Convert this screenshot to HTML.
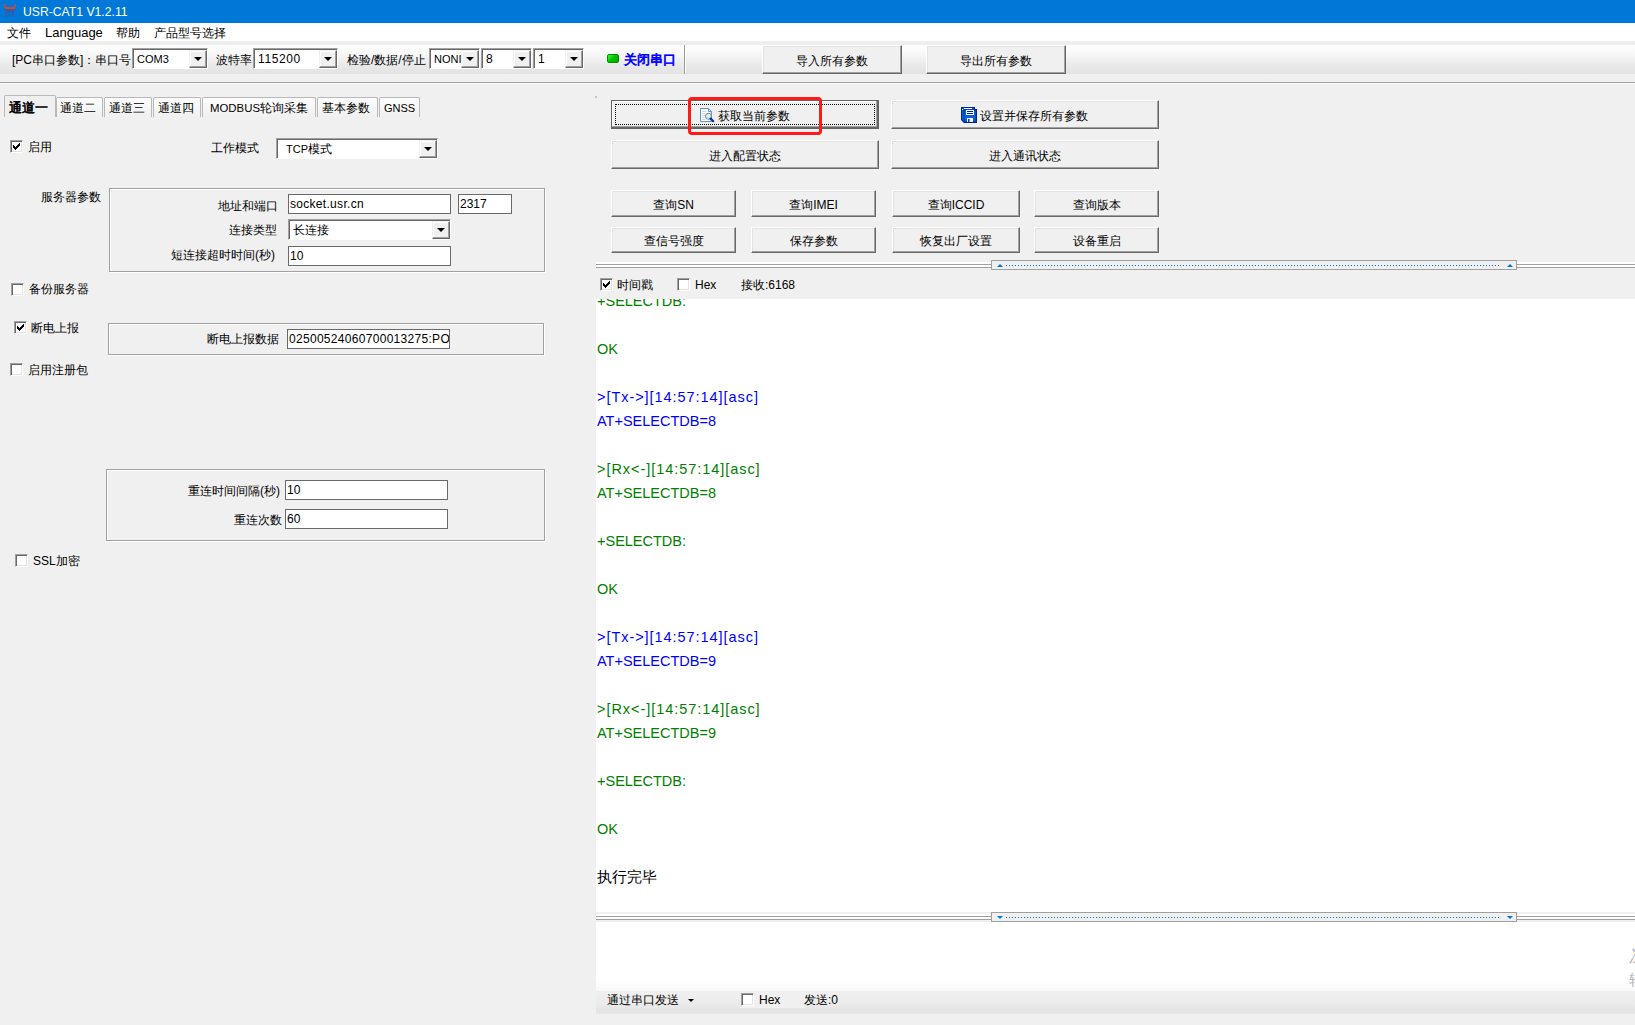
<!DOCTYPE html>
<html><head><meta charset="utf-8">
<style>
*{box-sizing:border-box;margin:0;padding:0}
html,body{width:1635px;height:1025px;overflow:hidden;background:#f0f0f0;font-family:"Liberation Sans",sans-serif;font-size:12px;color:#000;position:relative}
.a{position:absolute}
.t{position:absolute;white-space:nowrap;line-height:14px;height:14px}
.btn{position:absolute;background:#f0f0f0;border:1px solid;border-color:#fff #696969 #696969 #fff;box-shadow:inset -1px -1px #a0a0a0,inset 1px 1px #e3e3e3;text-align:center;white-space:nowrap}
.btn span{position:absolute;left:0;right:0;top:50%;margin-top:-6px;line-height:14px}
.cb{position:absolute;width:13px;height:13px;background:#fff;border:1px solid;border-color:#a0a0a0 #fff #fff #a0a0a0;box-shadow:inset 1px 1px #696969,inset -1px -1px #e3e3e3}
.cb svg{position:absolute;left:1px;top:1px}
.ed{position:absolute;background:#fff;border:1px solid #6a6a6a;white-space:nowrap;overflow:hidden}
.ed span{position:absolute;left:1px;top:50%;margin-top:-7px;line-height:14px}
.combo{position:absolute;background:#fff;border:1px solid;border-color:#a0a0a0 #fff #fff #a0a0a0;box-shadow:inset 1px 1px #696969;white-space:nowrap;overflow:hidden}
.combo span{position:absolute;left:4px;top:50%;margin-top:-7px;line-height:14px}
.combo i{position:absolute;right:0;top:1px;bottom:0;width:18px;background:#f0f0f0;border:1px solid;border-color:#f0f0f0 #696969 #696969 #f0f0f0;box-shadow:inset -1px -1px #a0a0a0,inset 1px 1px #fff}
.combo i:after{content:"";position:absolute;left:50%;top:50%;margin-left:-4px;margin-top:-2px;border-left:4px solid transparent;border-right:4px solid transparent;border-top:4px solid #000}
.grp{position:absolute;border:1px solid #a0a0a0;box-shadow:inset 1px 1px #fff,1px 1px #fff}
.tab{position:absolute;border:1px solid #b9b9b9;border-bottom:none;border-radius:2px 2px 0 0;background:linear-gradient(#fdfdfd,#f0f0f0)}
.tab span{position:absolute;left:0;right:0;text-align:center;top:4px;line-height:14px}
.log{position:absolute;margin-top:2px;white-space:nowrap;font-size:14.5px;line-height:24px;height:24px}
.bl{color:#0000ff}.gr{color:#008000}
</style></head><body>

<!-- title bar -->
<div class="a" style="left:0;top:0;width:1635px;height:23px;background:#0078d7"></div>
<svg class="a" style="left:0;top:0" width="22" height="22" viewBox="0 0 22 22">
<path d="M4 4.5 Q4.5 3.5 5.5 4.5 L6 7 L14 7 L14.5 4.5 Q15.5 3.5 16 4.5 L15 9 L5 9Z" fill="#d8452c"/>
<path d="M4.5 9 L15.5 9 L15 12 L14 12 L13.5 17.5 L12.5 17.5 L12 12 L10.5 12 L10 16.5 L9 16.5 L8.5 12 L7.5 12 L7 17.5 L6 17.5 L5 12Z" fill="#2b5fb0"/>
</svg>
<div class="t" style="left:23px;top:5px;color:#fff;font-size:12.2px">USR-CAT1 V1.2.11</div>

<!-- menu -->
<div class="a" style="left:0;top:23px;width:1635px;height:18px;background:#fff"></div>
<div class="t" style="left:7px;top:26px">文件</div>
<div class="t" style="left:45px;top:26px;font-size:13px">Language</div>
<div class="t" style="left:116px;top:26px">帮助</div>
<div class="t" style="left:154px;top:26px">产品型号选择</div>

<!-- toolbar -->
<div class="a" style="left:0;top:41px;width:1635px;height:4px;background:#eeeeee"></div>
<div class="a" style="left:0;top:45px;width:1635px;height:29px;background:linear-gradient(#fefefe,#f8f8f8 30%,#e9e9e9 70%,#e3e3e3)"></div>
<div class="a" style="left:0;top:82px;width:1635px;height:1px;background:#a0a0a0"></div>
<div class="a" style="left:0;top:83px;width:1635px;height:1px;background:#fff"></div>

<div class="t" style="left:12px;top:53px">[PC串口参数]：串口号</div>
<div class="combo" style="left:132px;top:48px;width:76px;height:21px"><span style="font-size:11px">COM3</span><i></i></div>
<div class="t" style="left:216px;top:53px">波特率</div>
<div class="combo" style="left:253px;top:48px;width:85px;height:21px"><span style="letter-spacing:.6px">115200</span><i></i></div>
<div class="t" style="left:347px;top:53px">检验/数据/停止</div>
<div class="combo" style="left:429px;top:48px;width:51px;height:21px"><span style="font-size:11px">NONI</span><i></i></div>
<div class="combo" style="left:481px;top:48px;width:51px;height:21px"><span>8</span><i></i></div>
<div class="combo" style="left:533px;top:48px;width:51px;height:21px"><span>1</span><i></i></div>
<div class="a" style="left:607px;top:54px;width:12px;height:9px;border-radius:2px;background:linear-gradient(135deg,#40ff40,#00c000 50%,#00a000);border:1px solid #008a00"></div>
<div class="t" style="left:624px;top:53px;color:#0000ff;font-size:13px;-webkit-text-stroke:0.7px #0000ff">关闭串口</div>
<div class="a" style="left:684px;top:45px;width:1px;height:29px;background:#9a9a9a"></div>
<div class="a" style="left:685px;top:45px;width:1px;height:28px;background:#fff"></div>
<div class="btn" style="left:762px;top:45px;width:140px;height:29px"><span>导入所有参数</span></div>
<div class="btn" style="left:926px;top:45px;width:140px;height:29px"><span>导出所有参数</span></div>

<!-- tabs -->
<div class="tab" style="left:56px;top:97px;width:47px;height:20px"></div>
<div class="tab" style="left:104px;top:97px;width:48px;height:20px"></div>
<div class="tab" style="left:153px;top:97px;width:48px;height:20px"></div>
<div class="tab" style="left:202px;top:97px;width:114px;height:20px"></div>
<div class="tab" style="left:317px;top:97px;width:61px;height:20px"></div>
<div class="tab" style="left:379px;top:97px;width:41px;height:20px"></div>
<div class="tab" style="left:4px;top:95px;width:52px;height:22px;background:#f0f0f0"></div>
<div class="t" style="left:60px;top:101px">通道二</div>
<div class="t" style="left:109px;top:101px">通道三</div>
<div class="t" style="left:158px;top:101px">通道四</div>
<div class="t" style="left:210px;top:101px"><span style="font-size:11.4px">MODBUS</span>轮询采集</div>
<div class="t" style="left:322px;top:101px">基本参数</div>
<div class="t" style="left:384px;top:101px;font-size:11px">GNSS</div>
<div class="t" style="left:9px;top:101px;font-size:12.5px;-webkit-text-stroke:0.6px #000">通道一</div>

<!-- LEFT PANEL -->
<div class="cb" style="left:10px;top:140px"><svg width="11" height="11" shape-rendering="crispEdges"><path d="M7 1h1v1h-1zM6 2h1v1h-1zM7 2h1v1h-1zM1 3h1v1h-1zM5 3h1v1h-1zM6 3h1v1h-1zM7 3h1v1h-1zM1 4h1v1h-1zM2 4h1v1h-1zM4 4h1v1h-1zM5 4h1v1h-1zM6 4h1v1h-1zM1 5h1v1h-1zM2 5h1v1h-1zM3 5h1v1h-1zM4 5h1v1h-1zM5 5h1v1h-1zM2 6h1v1h-1zM3 6h1v1h-1zM4 6h1v1h-1zM3 7h1v1h-1z" fill="#000"/></svg></div>
<div class="t" style="left:28px;top:140px">启用</div>
<div class="t" style="left:211px;top:141px">工作模式</div>
<div class="combo" style="left:276px;top:138px;width:162px;height:21px"><span style="left:9px"><span style="position:static;font-size:11px">TCP</span>模式</span><i></i></div>

<div class="t" style="left:41px;top:190px">服务器参数</div>
<div class="grp" style="left:109px;top:188px;width:436px;height:84px"></div>
<div class="t" style="left:218px;top:199px">地址和端口</div>
<div class="ed" style="left:288px;top:194px;width:163px;height:20px"><span style="letter-spacing:.3px">socket.usr.cn</span></div>
<div class="ed" style="left:458px;top:194px;width:54px;height:20px"><span>2317</span></div>
<div class="t" style="left:229px;top:223px">连接类型</div>
<div class="combo" style="left:288px;top:219px;width:163px;height:21px"><span>长连接</span><i></i></div>
<div class="t" style="left:171px;top:248px">短连接超时时间(秒)</div>
<div class="ed" style="left:288px;top:246px;width:163px;height:20px"><span>10</span></div>

<div class="cb" style="left:11px;top:283px"></div>
<div class="t" style="left:29px;top:282px">备份服务器</div>

<div class="cb" style="left:14px;top:321px"><svg width="11" height="11" shape-rendering="crispEdges"><path d="M7 1h1v1h-1zM6 2h1v1h-1zM7 2h1v1h-1zM1 3h1v1h-1zM5 3h1v1h-1zM6 3h1v1h-1zM7 3h1v1h-1zM1 4h1v1h-1zM2 4h1v1h-1zM4 4h1v1h-1zM5 4h1v1h-1zM6 4h1v1h-1zM1 5h1v1h-1zM2 5h1v1h-1zM3 5h1v1h-1zM4 5h1v1h-1zM5 5h1v1h-1zM2 6h1v1h-1zM3 6h1v1h-1zM4 6h1v1h-1zM3 7h1v1h-1z" fill="#000"/></svg></div>
<div class="t" style="left:31px;top:321px">断电上报</div>
<div class="grp" style="left:108px;top:323px;width:436px;height:32px"></div>
<div class="t" style="left:207px;top:332px">断电上报数据</div>
<div class="ed" style="left:287px;top:329px;width:163px;height:20px"><span style="letter-spacing:.3px">02500524060700013275:PO</span></div>

<div class="cb" style="left:10px;top:363px"></div>
<div class="t" style="left:28px;top:363px">启用注册包</div>

<div class="grp" style="left:106px;top:469px;width:439px;height:72px"></div>
<div class="t" style="left:188px;top:484px">重连时间间隔(秒)</div>
<div class="ed" style="left:285px;top:480px;width:163px;height:20px"><span>10</span></div>
<div class="t" style="left:234px;top:513px">重连次数</div>
<div class="ed" style="left:285px;top:509px;width:163px;height:20px"><span>60</span></div>

<div class="cb" style="left:15px;top:554px"></div>
<div class="t" style="left:33px;top:554px">SSL加密</div>

<!-- RIGHT PANEL -->
<div class="a" style="left:595px;top:96px;width:2px;height:2px;background:#c4c4c4"></div>
<div class="btn" style="left:611px;top:100px;width:268px;height:29px;border-color:#646464;box-shadow:inset -1px -1px #696969,inset -2px -2px #a0a0a0,inset 1px 1px #fff"><div class="a" style="left:3px;top:3px;right:3px;bottom:3px;border:1px dotted #000"></div><span style="padding-left:18px">获取当前参数</span></div>
<div class="btn" style="left:891px;top:100px;width:268px;height:29px"><span style="padding-left:18px">设置并保存所有参数</span></div>
<div class="btn" style="left:611px;top:140px;width:268px;height:29px"><span>进入配置状态</span></div>
<div class="btn" style="left:891px;top:140px;width:268px;height:29px"><span>进入通讯状态</span></div>
<div class="btn" style="left:611px;top:190px;width:125px;height:27px"><span>查询SN</span></div>
<div class="btn" style="left:751px;top:190px;width:125px;height:27px"><span>查询IMEI</span></div>
<div class="btn" style="left:892px;top:190px;width:128px;height:27px"><span>查询ICCID</span></div>
<div class="btn" style="left:1034px;top:190px;width:125px;height:27px"><span>查询版本</span></div>
<div class="btn" style="left:611px;top:227px;width:125px;height:26px"><span>查信号强度</span></div>
<div class="btn" style="left:751px;top:227px;width:125px;height:26px"><span>保存参数</span></div>
<div class="btn" style="left:892px;top:227px;width:128px;height:26px"><span>恢复出厂设置</span></div>
<div class="btn" style="left:1034px;top:227px;width:125px;height:26px"><span>设备重启</span></div>


<!-- icons -->
<svg class="a" style="left:696px;top:104px" width="24" height="22" viewBox="0 0 24 22">
<path d="M4.5 4.5 H12.5 L15.5 7.5 V17.5 H4.5Z" fill="#fff" stroke="#5b97d4" stroke-width="1"/>
<path d="M12.5 4.5 V7.5 H15.5" fill="none" stroke="#5b97d4" stroke-width="1"/>
<rect x="6" y="7" width="4.5" height="1" fill="#d8d8d8"/>
<rect x="6" y="9" width="3.5" height="1" fill="#d8d8d8"/>
<rect x="6" y="11" width="2.5" height="1" fill="#d8d8d8"/>
<rect x="6" y="13" width="2.5" height="1" fill="#d8d8d8"/>
<rect x="6" y="15" width="3.5" height="1" fill="#d8d8d8"/>
<circle cx="12.5" cy="12.3" r="3" fill="#c6f6f8" stroke="#7a7a7a" stroke-width="1"/>
<path d="M14.6 14.6 L17.2 17.2" stroke="#0a2ea0" stroke-width="2.2" stroke-linecap="round"/>
</svg>
<svg class="a" style="left:957px;top:104px" width="24" height="22" viewBox="0 0 24 22">
<path d="M4 3 H18 V5 H20 V19 H7 L4 16Z" fill="#00229c"/>
<path d="M5 4 H17 V6 H19 V18 H7.5 L5 15.5Z" fill="#0064d2"/>
<rect x="7" y="6" width="12" height="12" fill="#0064d2" stroke="#00229c" stroke-width="0.8"/>
<rect x="7" y="4" width="8" height="1" fill="#fff"/>
<rect x="9" y="6" width="8" height="5" fill="#fff"/>
<rect x="10" y="7" width="6" height="1" fill="#00229c"/>
<rect x="10" y="9" width="6" height="1" fill="#00229c"/>
<rect x="10" y="14" width="6" height="4" fill="#f8f4e8"/>
<rect x="11" y="15" width="1.6" height="3" fill="#0040b8"/>
<rect x="5" y="5" width="1" height="1" fill="#fff"/>
</svg>

<!-- red highlight -->
<div class="a" style="left:688px;top:97px;width:134px;height:38px;border:3px solid #ff1a1a;border-radius:4px"></div>

<!-- splitter 1 -->
<div class="a" style="left:596px;top:262px;width:1039px;height:2px;background:#fff"></div>
<div class="a" style="left:596px;top:264px;width:1039px;height:1px;background:#a0a0a0"></div>
<div class="a" style="left:596px;top:265px;width:1039px;height:2px;background:#fff"></div>
<div class="a" style="left:596px;top:267px;width:1039px;height:1px;background:#a0a0a0"></div>
<div class="a" style="left:991px;top:260px;width:526px;height:10px;background:#f0f0f0;border:1px solid #a0a0a0"></div>
<div class="a" style="left:1006px;top:265px;width:494px;height:1px;background:repeating-linear-gradient(90deg,#0078d7 0 1px,transparent 1px 3px)"></div>
<div class="a" style="left:997px;top:264px;width:0;height:0;border-left:3px solid transparent;border-right:3px solid transparent;border-bottom:3px solid #0078d7"></div>
<div class="a" style="left:1507px;top:264px;width:0;height:0;border-left:3px solid transparent;border-right:3px solid transparent;border-bottom:3px solid #0078d7"></div>

<!-- receive header -->
<div class="cb" style="left:600px;top:278px"><svg width="11" height="11" shape-rendering="crispEdges"><path d="M7 1h1v1h-1zM6 2h1v1h-1zM7 2h1v1h-1zM1 3h1v1h-1zM5 3h1v1h-1zM6 3h1v1h-1zM7 3h1v1h-1zM1 4h1v1h-1zM2 4h1v1h-1zM4 4h1v1h-1zM5 4h1v1h-1zM6 4h1v1h-1zM1 5h1v1h-1zM2 5h1v1h-1zM3 5h1v1h-1zM4 5h1v1h-1zM5 5h1v1h-1zM2 6h1v1h-1zM3 6h1v1h-1zM4 6h1v1h-1zM3 7h1v1h-1z" fill="#000"/></svg></div>
<div class="t" style="left:617px;top:278px">时间戳</div>
<div class="cb" style="left:677px;top:278px"></div>
<div class="t" style="left:695px;top:278px">Hex</div>
<div class="t" style="left:741px;top:278px">接收:6168</div>

<!-- log area -->
<div class="a" style="left:596px;top:299px;width:1039px;height:613px;background:#fff;overflow:hidden">
</div>
<div class="a" style="left:596px;top:299px;width:1039px;height:613px;overflow:hidden">
<div class="log gr" style="left:1px;top:-12px">+SELECTDB:</div>
<div class="log gr" style="left:1px;top:36px">OK</div>
<div class="log bl" style="left:1px;top:84px;letter-spacing:.95px">&gt;[Tx-&gt;][14:57:14][asc]</div>
<div class="log bl" style="left:1px;top:108px">AT+SELECTDB=8</div>
<div class="log gr" style="left:1px;top:156px;letter-spacing:.95px">&gt;[Rx&lt;-][14:57:14][asc]</div>
<div class="log gr" style="left:1px;top:180px">AT+SELECTDB=8</div>
<div class="log gr" style="left:1px;top:228px">+SELECTDB:</div>
<div class="log gr" style="left:1px;top:276px">OK</div>
<div class="log bl" style="left:1px;top:324px;letter-spacing:.95px">&gt;[Tx-&gt;][14:57:14][asc]</div>
<div class="log bl" style="left:1px;top:348px">AT+SELECTDB=9</div>
<div class="log gr" style="left:1px;top:396px;letter-spacing:.95px">&gt;[Rx&lt;-][14:57:14][asc]</div>
<div class="log gr" style="left:1px;top:420px">AT+SELECTDB=9</div>
<div class="log gr" style="left:1px;top:468px">+SELECTDB:</div>
<div class="log gr" style="left:1px;top:516px">OK</div>
<div class="log" style="left:1px;top:564px">执行完毕</div>
</div>

<!-- splitter 2 -->
<div class="a" style="left:596px;top:912px;width:1039px;height:10px;background:#f0f0f0"></div>
<div class="a" style="left:596px;top:914px;width:1039px;height:2px;background:#fff"></div>
<div class="a" style="left:596px;top:916px;width:1039px;height:1px;background:#a0a0a0"></div>
<div class="a" style="left:596px;top:917px;width:1039px;height:2px;background:#fff"></div>
<div class="a" style="left:596px;top:919px;width:1039px;height:1px;background:#a0a0a0"></div>
<div class="a" style="left:991px;top:912px;width:526px;height:10px;background:#f0f0f0;border:1px solid #a0a0a0"></div>
<div class="a" style="left:1006px;top:917px;width:494px;height:1px;background:repeating-linear-gradient(90deg,#0078d7 0 1px,transparent 1px 3px)"></div>
<div class="a" style="left:997px;top:916px;width:0;height:0;border-left:3px solid transparent;border-right:3px solid transparent;border-top:3px solid #0078d7"></div>
<div class="a" style="left:1507px;top:916px;width:0;height:0;border-left:3px solid transparent;border-right:3px solid transparent;border-top:3px solid #0078d7"></div>

<!-- send area -->
<div class="a" style="left:596px;top:922px;width:1039px;height:61px;background:#fff"></div>
<div class="a" style="left:596px;top:981px;width:1039px;height:10px;background:linear-gradient(#fff,#f8f8f8)"></div>
<div class="a" style="left:596px;top:991px;width:1039px;height:23px;background:linear-gradient(#f0f0f0,#ececec 50%,#e4e4e4 85%,#e6e6e6)"></div>
<div class="t" style="left:607px;top:993px">通过串口发送</div>
<div class="a" style="left:688px;top:999px;width:0;height:0;border-left:3px solid transparent;border-right:3px solid transparent;border-top:3px solid #000"></div>
<div class="a" style="left:740px;top:991px;width:65px;height:17px;background:#f0f0f0"></div>
<div class="cb" style="left:741px;top:993px"></div>
<div class="t" style="left:759px;top:993px">Hex</div>
<div class="t" style="left:804px;top:993px">发送:0</div>


<!-- watermark -->
<div class="a" style="left:1629px;top:941px;font-size:22px;line-height:26px;color:#b4b4b4;font-style:italic;white-space:nowrap">激活 Windows</div>
<div class="a" style="left:1629px;top:971px;font-size:15px;line-height:18px;color:#b4b4b4;white-space:nowrap">转到“设置”以激活 Windows。</div>
</body></html>
